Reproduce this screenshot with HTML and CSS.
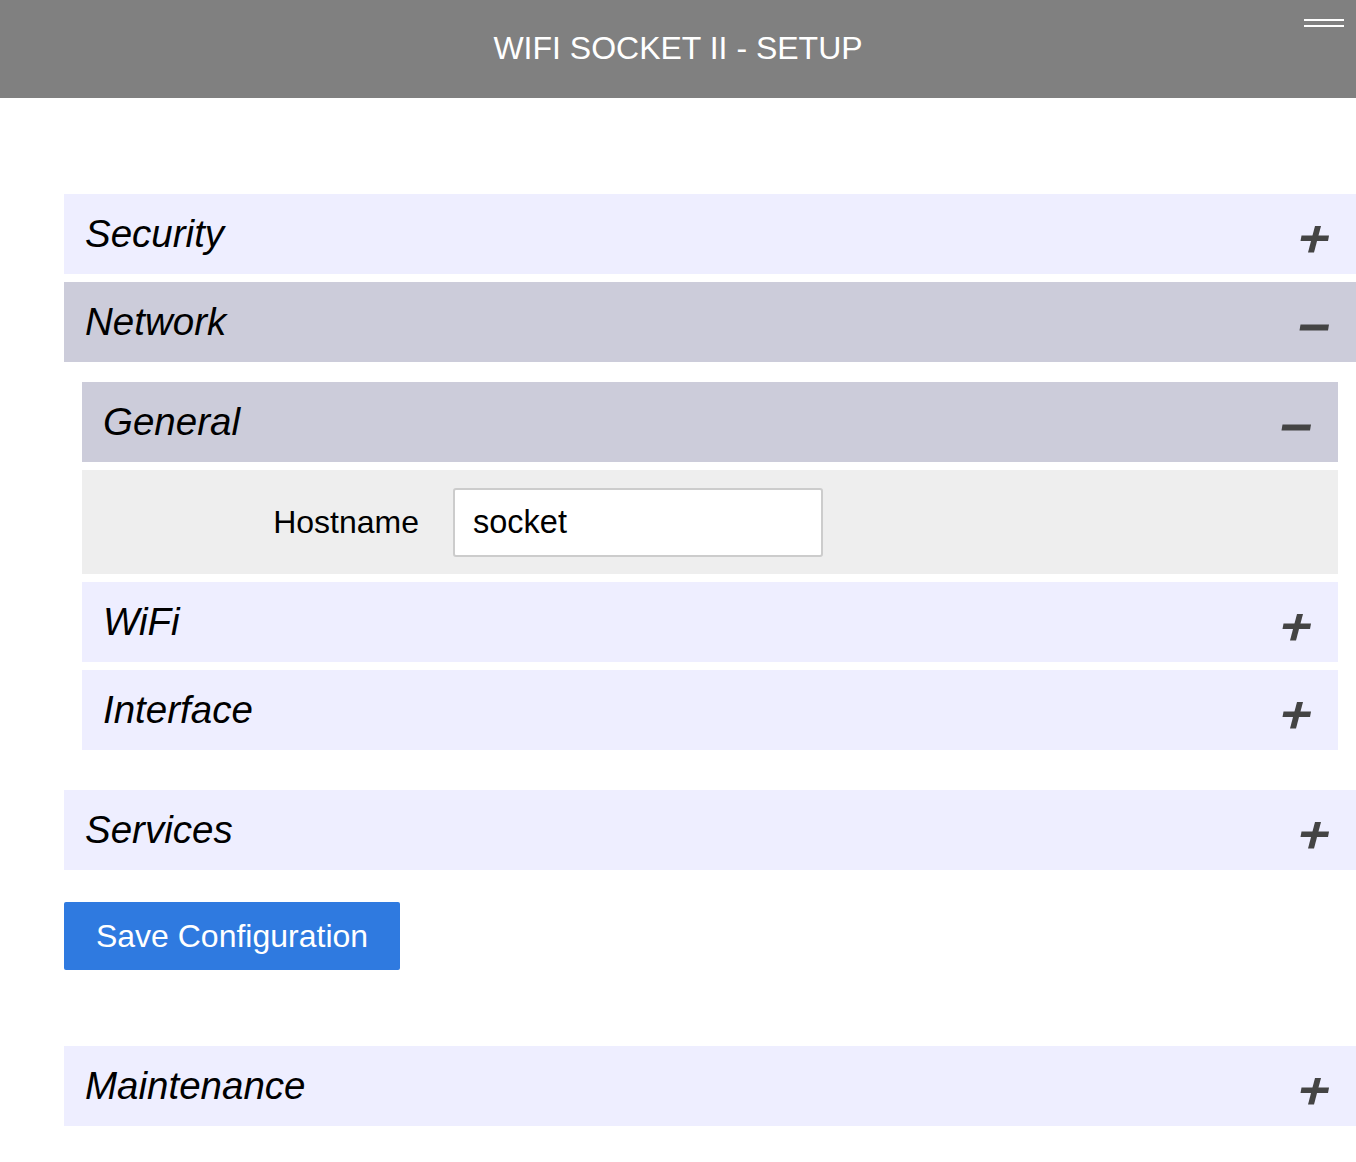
FILE: index.html
```html
<!DOCTYPE html>
<html>
<head>
<meta charset="utf-8">
<link rel="stylesheet" href="styles.css">
</head>
<body>
<header class="topbar">
  <h1 class="title">WIFI SOCKET II - SETUP</h1>
  <div class="menu"><span></span><span></span></div>
</header>
<main class="content">
  <section class="panel">
    <div class="head closed"><span class="name">Security</span>
      <svg class="sign" viewBox="0 0 30 28"><polygon points="2.5,9.5 30,9.5 29,15 1.5,15"/><polygon points="16,0 22,0 15,26.5 9,26.5"/></svg></div>
  </section>
  <section class="panel">
    <div class="head open"><span class="name">Network</span>
      <svg class="sign" viewBox="0 0 30 28"><polygon points="1.5,10.5 30,10.5 29,16.5 0.5,16.5"/></svg></div>
    <div class="body">
      <section class="panel">
        <div class="head open"><span class="name">General</span>
          <svg class="sign" viewBox="0 0 30 28"><polygon points="1.5,10.5 30,10.5 29,16.5 0.5,16.5"/></svg></div>
        <div class="fields">
          <label class="label" for="host">Hostname</label>
          <input id="host" class="input" type="text" value="socket">
        </div>
      </section>
      <section class="panel">
        <div class="head closed"><span class="name">WiFi</span>
          <svg class="sign" viewBox="0 0 30 28"><polygon points="2.5,9.5 30,9.5 29,15 1.5,15"/><polygon points="16,0 22,0 15,26.5 9,26.5"/></svg></div>
      </section>
      <section class="panel">
        <div class="head closed"><span class="name">Interface</span>
          <svg class="sign" viewBox="0 0 30 28"><polygon points="2.5,9.5 30,9.5 29,15 1.5,15"/><polygon points="16,0 22,0 15,26.5 9,26.5"/></svg></div>
      </section>
    </div>
  </section>
  <section class="panel services">
    <div class="head closed"><span class="name">Services</span>
      <svg class="sign" viewBox="0 0 30 28"><polygon points="2.5,9.5 30,9.5 29,15 1.5,15"/><polygon points="16,0 22,0 15,26.5 9,26.5"/></svg></div>
  </section>
  <button class="save">Save Configuration</button>
  <section class="panel maint">
    <div class="head closed"><span class="name">Maintenance</span>
      <svg class="sign" viewBox="0 0 30 28"><polygon points="2.5,9.5 30,9.5 29,15 1.5,15"/><polygon points="16,0 22,0 15,26.5 9,26.5"/></svg></div>
  </section>
</main>
</body>
</html>
```
FILE: styles.css
```css
html, body {
  margin: 0;
  padding: 0;
  background: #fff;
  font-family: "Liberation Sans", Arial, sans-serif;
}
.topbar {
  position: relative;
  height: 98px;
  background: #808080;
  display: flex;
  align-items: center;
  justify-content: center;
}
.title {
  margin: 0;
  font-weight: normal;
  font-size: 32px;
  color: #fff;
  position: relative;
  top: -1px;
}
.menu {
  position: absolute;
  right: 12px;
  top: 19px;
  width: 40px;
  display: flex;
  flex-direction: column;
  gap: 4px;
}
.menu span {
  display: block;
  height: 2px;
  background: #fff;
}
.content {
  padding: 96px 0 40px 64px;
  display: flex;
  flex-direction: column;
  align-items: flex-start;
}
.panel {
  width: 100%;
  margin-bottom: 8px;
}
.head {
  height: 80px;
  display: flex;
  align-items: flex-start;
  justify-content: space-between;
  padding: 0 27px 0 21px;
  box-sizing: border-box;
}
.closed { background: #eeeeff; }
.open { background: #ccccda; }
.name {
  font-style: italic;
  font-size: 38.5px;
  line-height: 80px;
  color: #000;
}
.sign {
  width: 30px;
  height: 28px;
  margin-top: 32px;
  fill: #444;
}
.body {
  padding: 20px 18px 32px 18px;
}
.body .panel:last-child { margin-bottom: 0; }
.fields {
  margin-top: 8px;
  background: #eeeeee;
  height: 104px;
  display: flex;
  align-items: flex-start;
  padding-top: 18px;
  box-sizing: border-box;
}
.label {
  width: 337px;
  text-align: right;
  font-size: 32px;
  line-height: 69px;
  color: #000;
}
.input {
  margin-left: 34px;
  width: 370px;
  height: 69px;
  box-sizing: border-box;
  border: 2px solid #cccccc;
  border-radius: 3px;
  padding: 0 18px;
  font-family: "Liberation Sans", Arial, sans-serif;
  font-size: 32.5px;
  color: #000;
  background: #fff;
}
.services { margin-bottom: 32px; }
.save {
  width: 336px;
  height: 68px;
  background: #2f7ae0;
  color: #fff;
  border: none;
  border-radius: 2px;
  font-family: "Liberation Sans", Arial, sans-serif;
  font-size: 32px;
  padding: 0;
  margin-bottom: 76px;
}
```
